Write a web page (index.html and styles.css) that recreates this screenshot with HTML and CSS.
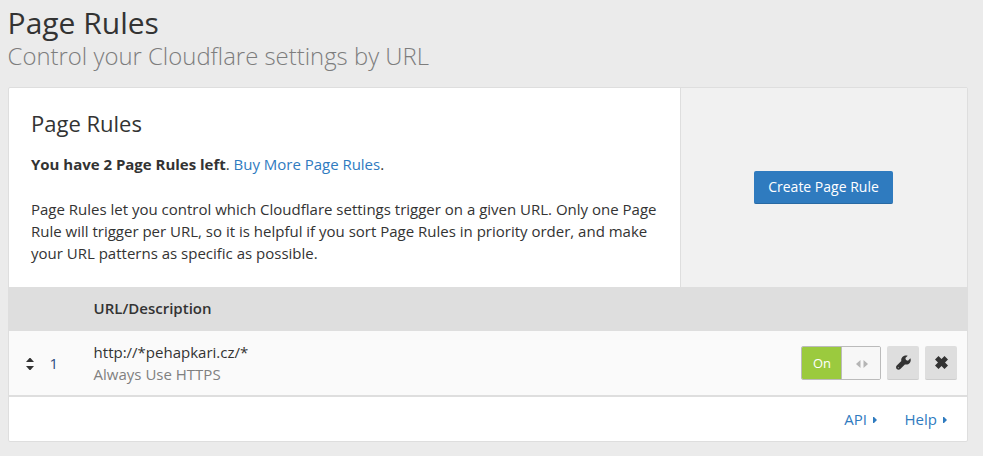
FILE: index.html
```
<!DOCTYPE html>
<html lang="en">
<head>
<meta charset="utf-8">
<title>Page Rules</title>
<link rel="stylesheet" href="styles.css">
</head>
<body>
<header class="page-header">
  <h1>Page Rules</h1>
  <p class="subtitle">Control your Cloudflare settings by URL</p>
</header>
<section class="card">
  <div class="card-top">
    <div class="card-main">
      <h2>Page Rules</h2>
      <p class="quota"><strong>You have 2 Page Rules left</strong>. <a href="#">Buy More Page Rules</a>.</p>
      <p class="desc">Page Rules let you control which Cloudflare settings trigger on a given URL. Only one Page<br>Rule will trigger per URL, so it is helpful if you sort Page Rules in priority order, and make<br>your URL patterns as specific as possible.</p>
    </div>
    <div class="card-side"><button class="primary">Create Page Rule</button></div>
  </div>
  <div class="table-head"><span>URL/Description</span></div>
  <div class="rule">
    <svg class="sort" width="8" height="12" viewBox="0 0 8 12"><path d="M0 4 3.500 0H4.500L8 4ZM0 8H8L4.500 12H3.500Z"/></svg>
    <span class="order">1</span>
    <div class="rule-text"><div>http://*pehapkari.cz/*</div><div class="muted">Always Use HTTPS</div></div>
    <div class="toggle"><span class="on">On</span><span class="off"><svg width="12" height="8" viewBox="0 0 12 8"><path d="M4.500 0V8L0 4ZM7.500 0 12 4 7.500 8Z"/></svg></span></div>
    <button class="icon" aria-label="Edit"><svg width="15" height="15" viewBox="0 0 16 16"><path d="M15.300 3.500 12.800 6 10.600 5.400 10 3.200 12.500.7C10.300 0 8 .6 6.600 2.300 5.600 3.500 5.300 5 5.700 6.300L.8 11.200C-.2 12.200-.2 13.900.8 14.900 1.800 16 3.600 16 4.600 15L9.500 10.100C11.500 10.500 13.700 9.800 15 7.900 15.900 6.500 16 4.900 15.300 3.500ZM2.500 13A.5.5 0 1 1 2.400 14 .5.5 0 0 1 2.500 13Z"/></svg></button>
    <button class="icon" aria-label="Delete"><svg width="13" height="13" viewBox="0 0 13 13"><path d="M3.500 0 6.500 3 9.500 0 13 3.500 10 6.500 13 9.500 9.500 13 6.500 10 3.500 13 0 9.500 3 6.500 0 3.500Z"/></svg></button>
  </div>
  <footer class="links">
    <a href="#">API<svg width="4" height="6" viewBox="0 0 4 6"><path d="M0 0H1L4 3 1 6H0Z"/></svg></a>
    <a href="#">Help<svg width="4" height="6" viewBox="0 0 4 6"><path d="M0 0H1L4 3 1 6H0Z"/></svg></a>
  </footer>
</section>
</body>
</html>
```
FILE: styles.css
```
* { box-sizing: border-box; }
body { margin: 0; padding: 0 15px 0 8px; background: #ebebeb; color: #333; font: 15px/22px "Open Sans", sans-serif; }
h1, h2, p { margin: 0; }
a { color: #2f7bbf; text-decoration: none; }
button { font: inherit; border: 0; padding: 0; }
.page-header { height: 87px; padding-top: 3px; margin-left: -0.4px; }
h1 { font-size: 30px; line-height: 39px; font-weight: 400; }
.subtitle { margin-top: 1px; font-size: 23.9px; line-height: 26px; font-weight: 300; color: #7d7d7d; }
.card { width: 960px; height: 355px; border: 1px solid #dedede; border-radius: 2px; background: #fff; }
.card-top { display: flex; height: 199px; }
.card-main { width: 672px; padding: 19px 22px 0; border-right: 1px solid #dedede; white-space: nowrap; }
h2 { font-size: 22px; line-height: 32px; font-weight: 400; }
.quota { margin-top: 14px; letter-spacing: -0.015px; }
.desc { margin-top: 23px; }
.card-side { flex: 1; display: flex; align-items: center; justify-content: center; padding-right: 2px; background: #f1f1f1; }
.primary { width: 139px; height: 33px; padding-left: 1px; border-bottom: 1px solid #2869a3; border-radius: 2px; background: #2f7bbf; color: #fff; font-size: 14px; }
.table-head { height: 44px; padding: 10px 0 0 84.6px; background: #dedede; font-weight: 600; }
.rule { display: flex; align-items: center; height: 66px; padding: 0 10px 0 17px; background: #fafafa; border-bottom: 2px solid #dedede; }
.sort { margin-top: 2px; fill: #333; }
.order { width: 44px; padding-left: 15.6px; color: #2c4a80; }
.rule-text { flex: 1; padding-left: 15.6px; }
.muted { color: #808080; }
.toggle { display: flex; width: 80px; height: 34px; border: 1px solid #bbb; border-radius: 2px; overflow: hidden; }
.on { width: 39px; padding-left: 1px; background: #9bca3e; color: #fff; font-size: 13px; line-height: 32px; text-align: center; }
.off { flex: 1; display: flex; align-items: center; justify-content: center; padding: 2px 0 0 2px; border-left: 1px solid #bbb; background: #f7f7f7; }
.off svg { fill: #b5b5b5; }
.icon { display: flex; align-items: center; justify-content: center; width: 32px; height: 34px; margin-left: 6px; border-bottom: 1px solid #cdcdcd; border-radius: 2px; background: #dedede; }
.icon svg { fill: #333; }
.links { display: flex; justify-content: flex-end; height: 44px; padding: 11px 20.5px 0 0; gap: 28px; }
.links svg { margin: 0 0 2px 5.5px; fill: #2f7bbf; }
```
